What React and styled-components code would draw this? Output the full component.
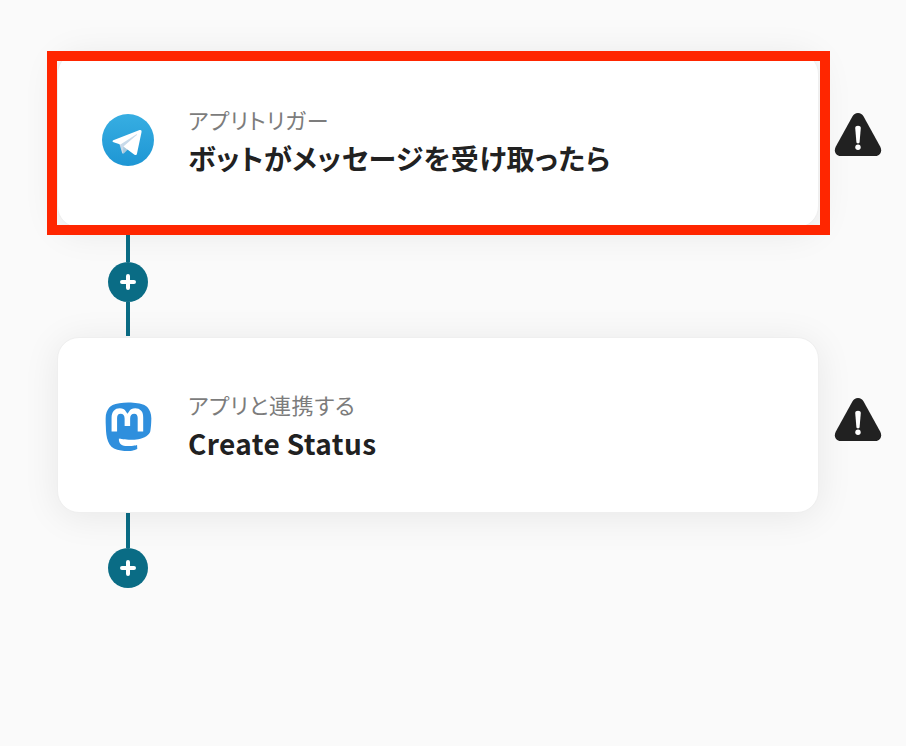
import React from "react";
import styled, { createGlobalStyle } from "styled-components";

const Global = createGlobalStyle`
  html, body { margin: 0; padding: 0; background: #fafafa; }
  body { font-family: "Noto Sans CJK JP", "Noto Sans", sans-serif; }
`;

const Page = styled.main`
  width: 906px;
  height: 746px;
  box-sizing: border-box;
  padding: 52px 0 0 57px;
  background: #fafafa;
  overflow: hidden;
  display: flex;
  flex-direction: column;
`;

const StepRow = styled.div`
  display: flex;
  align-items: center;
  gap: 15px;
  position: relative;
`;

const Card = styled.section`
  width: 762px;
  height: 176px;
  box-sizing: border-box;
  flex: none;
  padding: 0 0 0 44px;
  display: flex;
  align-items: center;
  gap: 34px;
  background: #fff;
  border-radius: 22px;
  border: 1px solid #efefef;
  box-shadow: 0 4px 36px rgba(0, 0, 0, 0.08);
`;

const Highlight = styled.div`
  position: absolute;
  left: -10px;
  top: -1px;
  width: 783px;
  height: 184px;
  box-sizing: border-box;
  border: 10px solid #ff2600;
  pointer-events: none;
`;

const IconSlot = styled.div`
  width: 52px;
  height: 52px;
  flex: none;
  display: flex;
  align-items: center;
  justify-content: center;
  svg { display: block; }
`;

const Texts = styled.div`
  display: flex;
  flex-direction: column;
  gap: 7px;
  font-feature-settings: "palt";
`;

const Label = styled.div`
  font-size: 22px;
  line-height: 28px;
  font-weight: 400;
  letter-spacing: 0.7px;
  color: #7c7c7c;
`;

const Title = styled.div`
  font-size: 28px;
  line-height: 36px;
  font-weight: 700;
  letter-spacing: 0.4px;
  color: #212121;
`;

const Warn = styled.div`
  width: 48px;
  height: 46px;
  flex: none;
  position: relative;
  top: -5px;
  svg { display: block; }
`;

const Connector = styled.div`
  width: 40px;
  margin-left: 51px;
  display: flex;
  flex-direction: column;
  align-items: center;
`;

const Line = styled.div`
  width: 4px;
  height: ${(p) => p.$h}px;
  background: #0a6c85;
`;

const Gap = styled.div`
  height: 1px;
`;

const AddButton = styled.div`
  width: 40px;
  height: 40px;
  flex: none;
  border-radius: 50%;
  background: #0a6c85;
  display: flex;
  align-items: center;
  justify-content: center;
  svg { display: block; }
`;

const TelegramIcon = () => (
  <svg width="52" height="52" viewBox="0 0 52 52">
    <defs>
      <linearGradient id="tg" x1="0" y1="0" x2="0" y2="1">
        <stop offset="0" stopColor="#37aee2" />
        <stop offset="1" stopColor="#1e96d4" />
      </linearGradient>
    </defs>
    <circle cx="26" cy="26" r="26" fill="url(#tg)" />
    <path d="M21 39.5c-.9 0-.7-.3-1-1.100L17.300 29.600 38 17.300" fill="#c8daea" />
    <path d="M21 39.500c.6 0 1-.3 1.300-.6l3.700-3.600-4.600-2.800" fill="#a9c9dd" />
    <path d="M21.400 32.500 32.500 40.700c1.300.7 2.200.3 2.500-1.200l4.500-21.200c.5-1.900-.7-2.700-1.900-2.200L11.900 26.100c-1.800.7-1.800 1.700-.3 2.200l6.800 2.100 15.700-9.900c.7-.5 1.400-.2.900.2" fill="#fff" />
  </svg>
);

const MastodonIcon = () => (
  <svg width="49" height="51" viewBox="0 -1 24 25">
    <path
      fill="#2f8fdd"
      d="M23.200 8.100c0-5.200-3.400-6.700-3.400-6.700C18.100.6 15.100.3 12 .2h-.1C8.800.3 5.900.6 4.200 1.400c0 0-3.400 1.500-3.400 6.700 0 1.200 0 2.600.1 4.100.1 5 .9 10 5.600 11.200 2.200.6 4 .7 5.500.6 2.700-.1 4.300-1 4.300-1l-.1-2s-2 .6-4.100.6c-2.200-.1-4.500-.2-4.800-2.900v-.8s2.100.5 4.800.6c1.600.1 3.200-.1 4.700-.3 3-.4 5.600-2.200 5.900-3.900.5-2.700.5-6.600.5-6.600z"
    />
    <path
      fill="#fff"
      d="M19.200 7.600v6.800h-2.700V7.800c0-1.400-.6-2.100-1.700-2.100-1.300 0-2 .8-2 2.500v3.600h-2.700V8.200c0-1.700-.7-2.500-2-2.500-1.100 0-1.700.7-1.700 2.100v6.600H3.700V7.600c0-1.400.4-2.500 1.100-3.300.7-.8 1.700-1.200 2.900-1.200 1.400 0 2.400.5 3.100 1.600l.7 1.100.7-1.100c.7-1.100 1.700-1.600 3.100-1.600 1.200 0 2.200.4 2.900 1.200.8.800 1 1.900 1 3.300z"
    />
  </svg>
);

const WarnIcon = () => (
  <svg width="48" height="46" viewBox="0 0 48 46">
    <path
      fill="#212121"
      d="M24 1c2.700 0 4.300 1.400 5.600 3.600l16.700 30.200c2.200 4.300-.1 9.200-4.900 9.200H6.600c-4.800 0-7.100-4.900-4.900-9.200L18.400 4.600C19.700 2.400 21.300 1 24 1z"
    />
    <path fill="#fff" d="M21.200 16c0-1.500 1.200-2.300 2.800-2.300s2.800.8 2.800 2.300l-1.200 14c-.1 1-.7 1.400-1.600 1.400s-1.500-.4-1.600-1.400z" />
    <circle cx="24" cy="35.300" r="2.700" fill="#fff" />
  </svg>
);

const PlusIcon = () => (
  <svg width="16" height="16" viewBox="0 0 16 16">
    <path d="M8 2v12M2 8h12" stroke="#fff" strokeWidth="4" strokeLinecap="round" />
  </svg>
);

function Step({ icon, label, title, highlighted }) {
  return (
    <StepRow>
      <Card>
        <IconSlot>{icon}</IconSlot>
        <Texts>
          <Label>{label}</Label>
          <Title>{title}</Title>
        </Texts>
      </Card>
      <Warn><WarnIcon /></Warn>
      {highlighted && <Highlight />}
    </StepRow>
  );
}

function AddConnector({ bottom }) {
  return (
    <Connector>
      <Line $h={bottom ? 35 : 34} />
      <AddButton><PlusIcon /></AddButton>
      {!bottom && <Line $h={34} />}
      {!bottom && <Gap />}
    </Connector>
  );
}

export default function App() {
  return (
    <>
      <Global />
      <Page>
        <Step icon={<TelegramIcon />} label="アプリトリガー" title="ボットがメッセージを受け取ったら" highlighted />
        <AddConnector />
        <Step icon={<MastodonIcon />} label="アプリと連携する" title="Create Status" />
        <AddConnector bottom />
      </Page>
    </>
  );
}
